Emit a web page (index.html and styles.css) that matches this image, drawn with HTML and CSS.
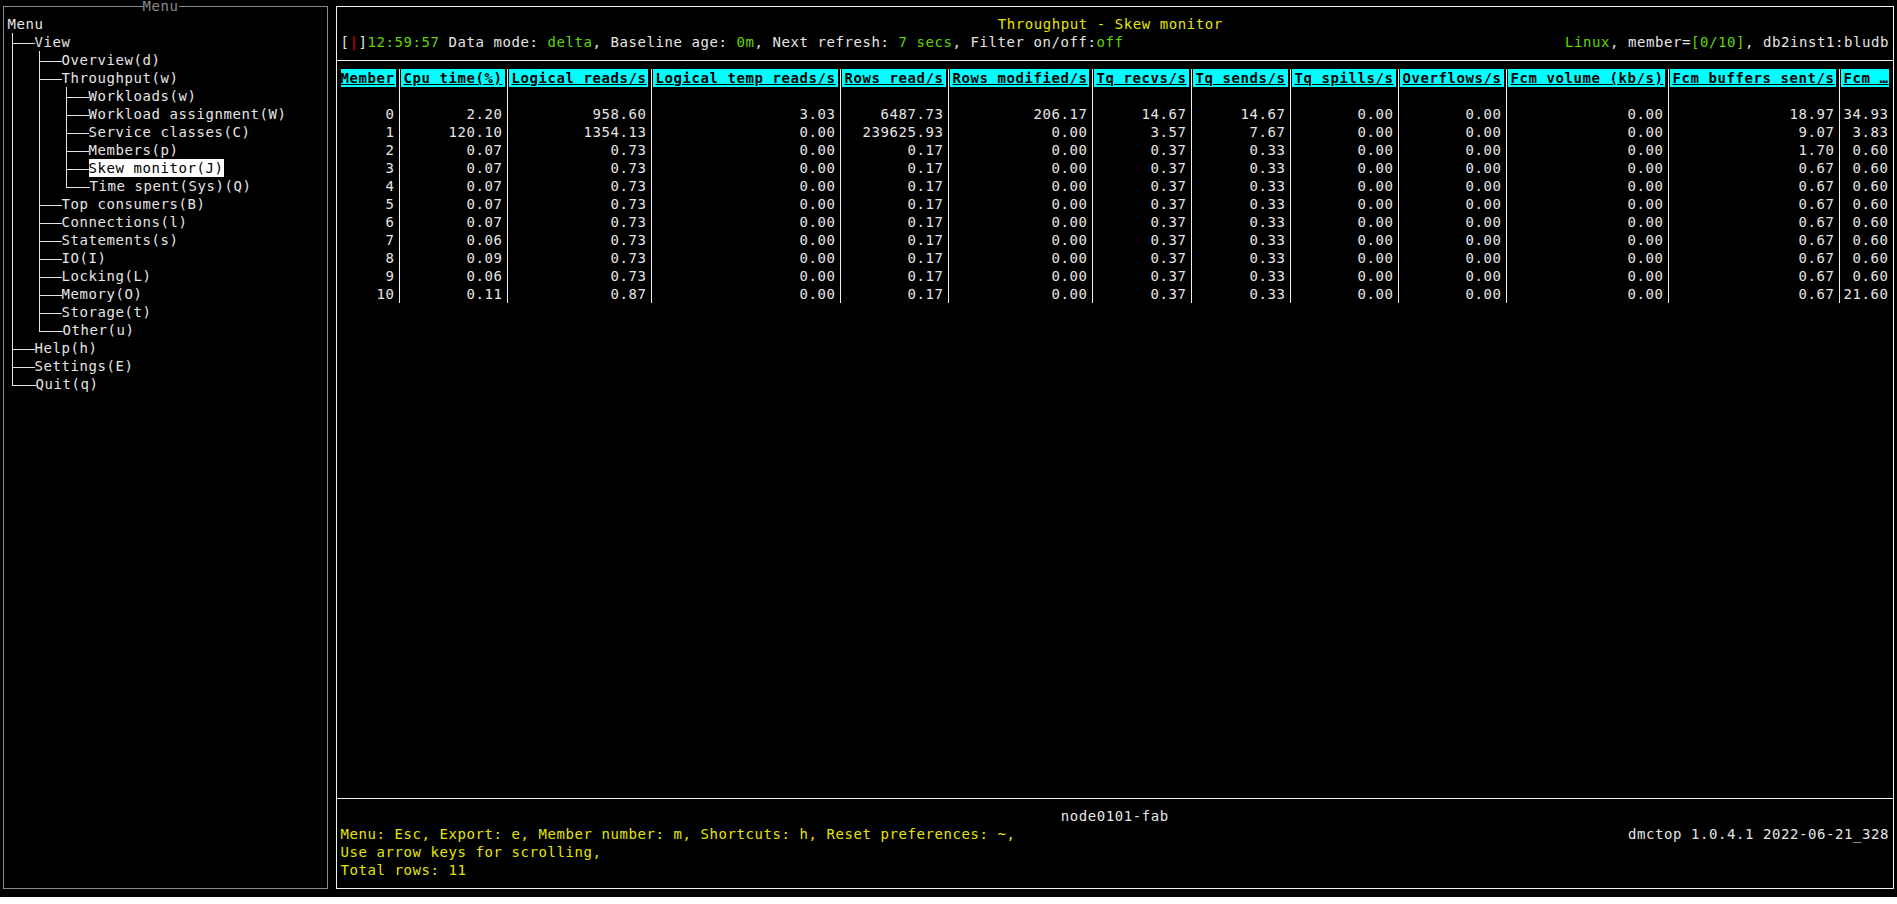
FILE: index.html
```html
<!DOCTYPE html>
<html lang="en">
<head>
<meta charset="utf-8">
<title>dmctop - Throughput - Skew monitor</title>
<link rel="stylesheet" href="styles.css">
</head>
<body>
<div class="screen">
  <aside class="menu-box">
    <div class="box-title"><span>Menu</span></div>
    <nav class="tree">
      <div class="root">Menu</div>
      <ul>
        <li><div class="node">View</div>
          <ul>
            <li><div class="node">Overview(d)</div></li>
            <li><div class="node">Throughput(w)</div>
              <ul>
                <li><div class="node">Workloads(w)</div></li>
                <li><div class="node">Workload assignment(W)</div></li>
                <li><div class="node">Service classes(C)</div></li>
                <li><div class="node">Members(p)</div></li>
                <li><div class="node"><span class="selected">Skew monitor(J)</span></div></li>
                <li><div class="node">Time spent(Sys)(Q)</div></li>
              </ul>
            </li>
            <li><div class="node">Top consumers(B)</div></li>
            <li><div class="node">Connections(l)</div></li>
            <li><div class="node">Statements(s)</div></li>
            <li><div class="node">IO(I)</div></li>
            <li><div class="node">Locking(L)</div></li>
            <li><div class="node">Memory(O)</div></li>
            <li><div class="node">Storage(t)</div></li>
            <li><div class="node">Other(u)</div></li>
          </ul>
        </li>
        <li><div class="node">Help(h)</div></li>
        <li><div class="node">Settings(E)</div></li>
        <li><div class="node">Quit(q)</div></li>
      </ul>
    </nav>
  </aside>

  <main class="main-box">
    <header class="status">
      <div class="title">Throughput - Skew monitor</div>
      <div class="line">
        <span>[<span class="red">|</span>]<span class="green">12:59:57</span> Data mode: <span class="green">delta</span>, Baseline age: <span class="green">0m</span>, Next refresh: <span class="green">7 secs</span>, Filter on/off:<span class="green">off</span></span>
        <span><span class="green">Linux</span>, member=<span class="green">[0/10]</span>, db2inst1:bludb</span>
      </div>
    </header>

    <section class="table-area">
      <table class="grid">
        <thead>
          <tr>
            <th class="w-first">Member</th>
            <th class="w11">Cpu time(%)</th>
            <th class="w15">Logical reads/s</th>
            <th class="w20">Logical temp reads/s</th>
            <th class="w11">Rows read/s</th>
            <th class="w15">Rows modified/s</th>
            <th class="w10">Tq recvs/s</th>
            <th class="w10">Tq sends/s</th>
            <th class="w11">Tq spills/s</th>
            <th class="w11">Overflows/s</th>
            <th class="w17">Fcm volume (kb/s)</th>
            <th class="w18">Fcm buffers sent/s</th>
            <th class="w-last">Fcm …</th>
          </tr>
        </thead>
        <tbody>
          <tr><td></td><td></td><td></td><td></td><td></td><td></td><td></td><td></td><td></td><td></td><td></td><td></td><td></td></tr>
          <tr><td>0</td><td>2.20</td><td>958.60</td><td>3.03</td><td>6487.73</td><td>206.17</td><td>14.67</td><td>14.67</td><td>0.00</td><td>0.00</td><td>0.00</td><td>18.97</td><td>34.93</td></tr>
          <tr><td>1</td><td>120.10</td><td>1354.13</td><td>0.00</td><td>239625.93</td><td>0.00</td><td>3.57</td><td>7.67</td><td>0.00</td><td>0.00</td><td>0.00</td><td>9.07</td><td>3.83</td></tr>
          <tr><td>2</td><td>0.07</td><td>0.73</td><td>0.00</td><td>0.17</td><td>0.00</td><td>0.37</td><td>0.33</td><td>0.00</td><td>0.00</td><td>0.00</td><td>1.70</td><td>0.60</td></tr>
          <tr><td>3</td><td>0.07</td><td>0.73</td><td>0.00</td><td>0.17</td><td>0.00</td><td>0.37</td><td>0.33</td><td>0.00</td><td>0.00</td><td>0.00</td><td>0.67</td><td>0.60</td></tr>
          <tr><td>4</td><td>0.07</td><td>0.73</td><td>0.00</td><td>0.17</td><td>0.00</td><td>0.37</td><td>0.33</td><td>0.00</td><td>0.00</td><td>0.00</td><td>0.67</td><td>0.60</td></tr>
          <tr><td>5</td><td>0.07</td><td>0.73</td><td>0.00</td><td>0.17</td><td>0.00</td><td>0.37</td><td>0.33</td><td>0.00</td><td>0.00</td><td>0.00</td><td>0.67</td><td>0.60</td></tr>
          <tr><td>6</td><td>0.07</td><td>0.73</td><td>0.00</td><td>0.17</td><td>0.00</td><td>0.37</td><td>0.33</td><td>0.00</td><td>0.00</td><td>0.00</td><td>0.67</td><td>0.60</td></tr>
          <tr><td>7</td><td>0.06</td><td>0.73</td><td>0.00</td><td>0.17</td><td>0.00</td><td>0.37</td><td>0.33</td><td>0.00</td><td>0.00</td><td>0.00</td><td>0.67</td><td>0.60</td></tr>
          <tr><td>8</td><td>0.09</td><td>0.73</td><td>0.00</td><td>0.17</td><td>0.00</td><td>0.37</td><td>0.33</td><td>0.00</td><td>0.00</td><td>0.00</td><td>0.67</td><td>0.60</td></tr>
          <tr><td>9</td><td>0.06</td><td>0.73</td><td>0.00</td><td>0.17</td><td>0.00</td><td>0.37</td><td>0.33</td><td>0.00</td><td>0.00</td><td>0.00</td><td>0.67</td><td>0.60</td></tr>
          <tr><td>10</td><td>0.11</td><td>0.87</td><td>0.00</td><td>0.17</td><td>0.00</td><td>0.37</td><td>0.33</td><td>0.00</td><td>0.00</td><td>0.00</td><td>0.67</td><td>21.60</td></tr>
        </tbody>
      </table>
    </section>

    <footer class="footer">
      <div class="host">node0101-fab</div>
      <div class="line">
        <span class="yellow">Menu: Esc, Export: e, Member number: m, Shortcuts: h, Reset preferences: ~,</span>
        <span>dmctop 1.0.4.1 2022-06-21_328</span>
      </div>
      <div class="yellow">Use arrow keys for scrolling,</div>
      <div class="yellow">Total rows: 11</div>
    </footer>
  </main>
</div>
</body>
</html>
```

FILE: styles.css
```css
* {
  box-sizing: border-box;
}

html,
body {
  margin: 0;
  padding: 0;
}

body {
  background: #ffffff;
  color: #e5e5e5;
  font-family: "DejaVu Sans Mono", monospace;
  font-size: 14px;
  letter-spacing: 0.5713px;
  line-height: 18px;
}

.screen {
  display: flex;
  align-items: flex-start;
  gap: 8px;
  height: 897px;
  padding: 6px 0 0 3px;
  background: #000000;
}

/* ---------- menu pane ---------- */

.menu-box {
  flex: none;
  width: 325px;
  height: 883px;
  border: 1px solid #8a8a8a;
  padding: 0 0 0 3.5px;
}

.box-title {
  height: 18px;
  margin-top: -10px;
  padding-left: 135px;
  color: #8a8a8a;
  white-space: pre;
}

.box-title span {
  background: #000000;
}

.tree ul {
  list-style: none;
  margin: 0;
  padding: 0;
}

.tree > ul {
  margin-left: 4.5px;
}

.tree li > ul {
  margin-left: 26px;
}

.tree li {
  border-left: 1px solid #e5e5e5;
}

.tree li:last-child {
  border-left-color: transparent;
}

.root,
.node {
  height: 18px;
  white-space: pre;
}

.node {
  display: flex;
}

.node::before {
  content: "";
  flex: none;
  width: 21.5px;
  height: 10px;
  border-bottom: 1px solid #e5e5e5;
}

.tree li:last-child > .node::before {
  width: 22.5px;
  margin-left: -1px;
  border-left: 1px solid #e5e5e5;
}

.selected {
  background: #ffffff;
  color: #000000;
}

/* ---------- main pane ---------- */

.main-box {
  flex: none;
  display: flex;
  flex-direction: column;
  width: 1558px;
  height: 883px;
  border: 1px solid #f0f0f0;
  padding: 8px 4px 9px 3.5px;
}

.status {
  margin: 0 -4px 0 -3.5px;
  padding: 0 4px 9px 3.5px;
  border-bottom: 1px solid #f0f0f0;
}

.title {
  height: 18px;
  padding-right: 9px;
  text-align: center;
  color: #e5e500;
  white-space: pre;
}

.line {
  display: flex;
  justify-content: space-between;
  height: 18px;
  white-space: pre;
}

.green {
  color: #5fd700;
}

.red {
  color: #e00000;
}

.yellow {
  color: #e5e500;
}

.table-area {
  flex: 1;
  padding-top: 8px;
}

.grid {
  width: 1548px;
  table-layout: fixed;
  border-collapse: separate;
  border-spacing: 0;
}

.grid th,
.grid td {
  height: 18px;
  padding: 0 4.5px 0 3.5px;
  border-right: 1px solid #f0f0f0;
  white-space: pre;
  overflow: hidden;
  line-height: 18px;
}

.grid td {
  text-align: right;
}

.grid th {
  text-align: left;
  color: #000000;
  font-weight: bold;
  text-decoration: underline;
  background: linear-gradient(to right, #000 1px, #00ffff 1px, #00ffff calc(100% - 2.5px), #000 calc(100% - 2.5px));
}

.grid th:first-child,
.grid td:first-child {
  padding-left: 0;
}

.grid th:first-child {
  background: linear-gradient(to right, #00ffff calc(100% - 2.5px), #000 calc(100% - 2.5px));
}

.grid th:last-child,
.grid td:last-child {
  padding-right: 0;
  border-right: 0;
}

.grid th:last-child {
  background: linear-gradient(to right, #000 1px, #00ffff 1px);
}

.w-first { width: 59.5px; }
.w10 { width: 99px; }
.w11 { width: 108px; }
.w15 { width: 144px; }
.w17 { width: 162px; }
.w18 { width: 171px; }
.w20 { width: 189px; }
.w-last { width: 48.5px; }

.footer {
  margin: 0 -4px 0 -3.5px;
  padding: 8px 4px 0 3.5px;
  border-top: 1px solid #f0f0f0;
}

.host {
  height: 18px;
  text-align: center;
  white-space: pre;
}

.footer .yellow {
  height: 18px;
  white-space: pre;
}
```
